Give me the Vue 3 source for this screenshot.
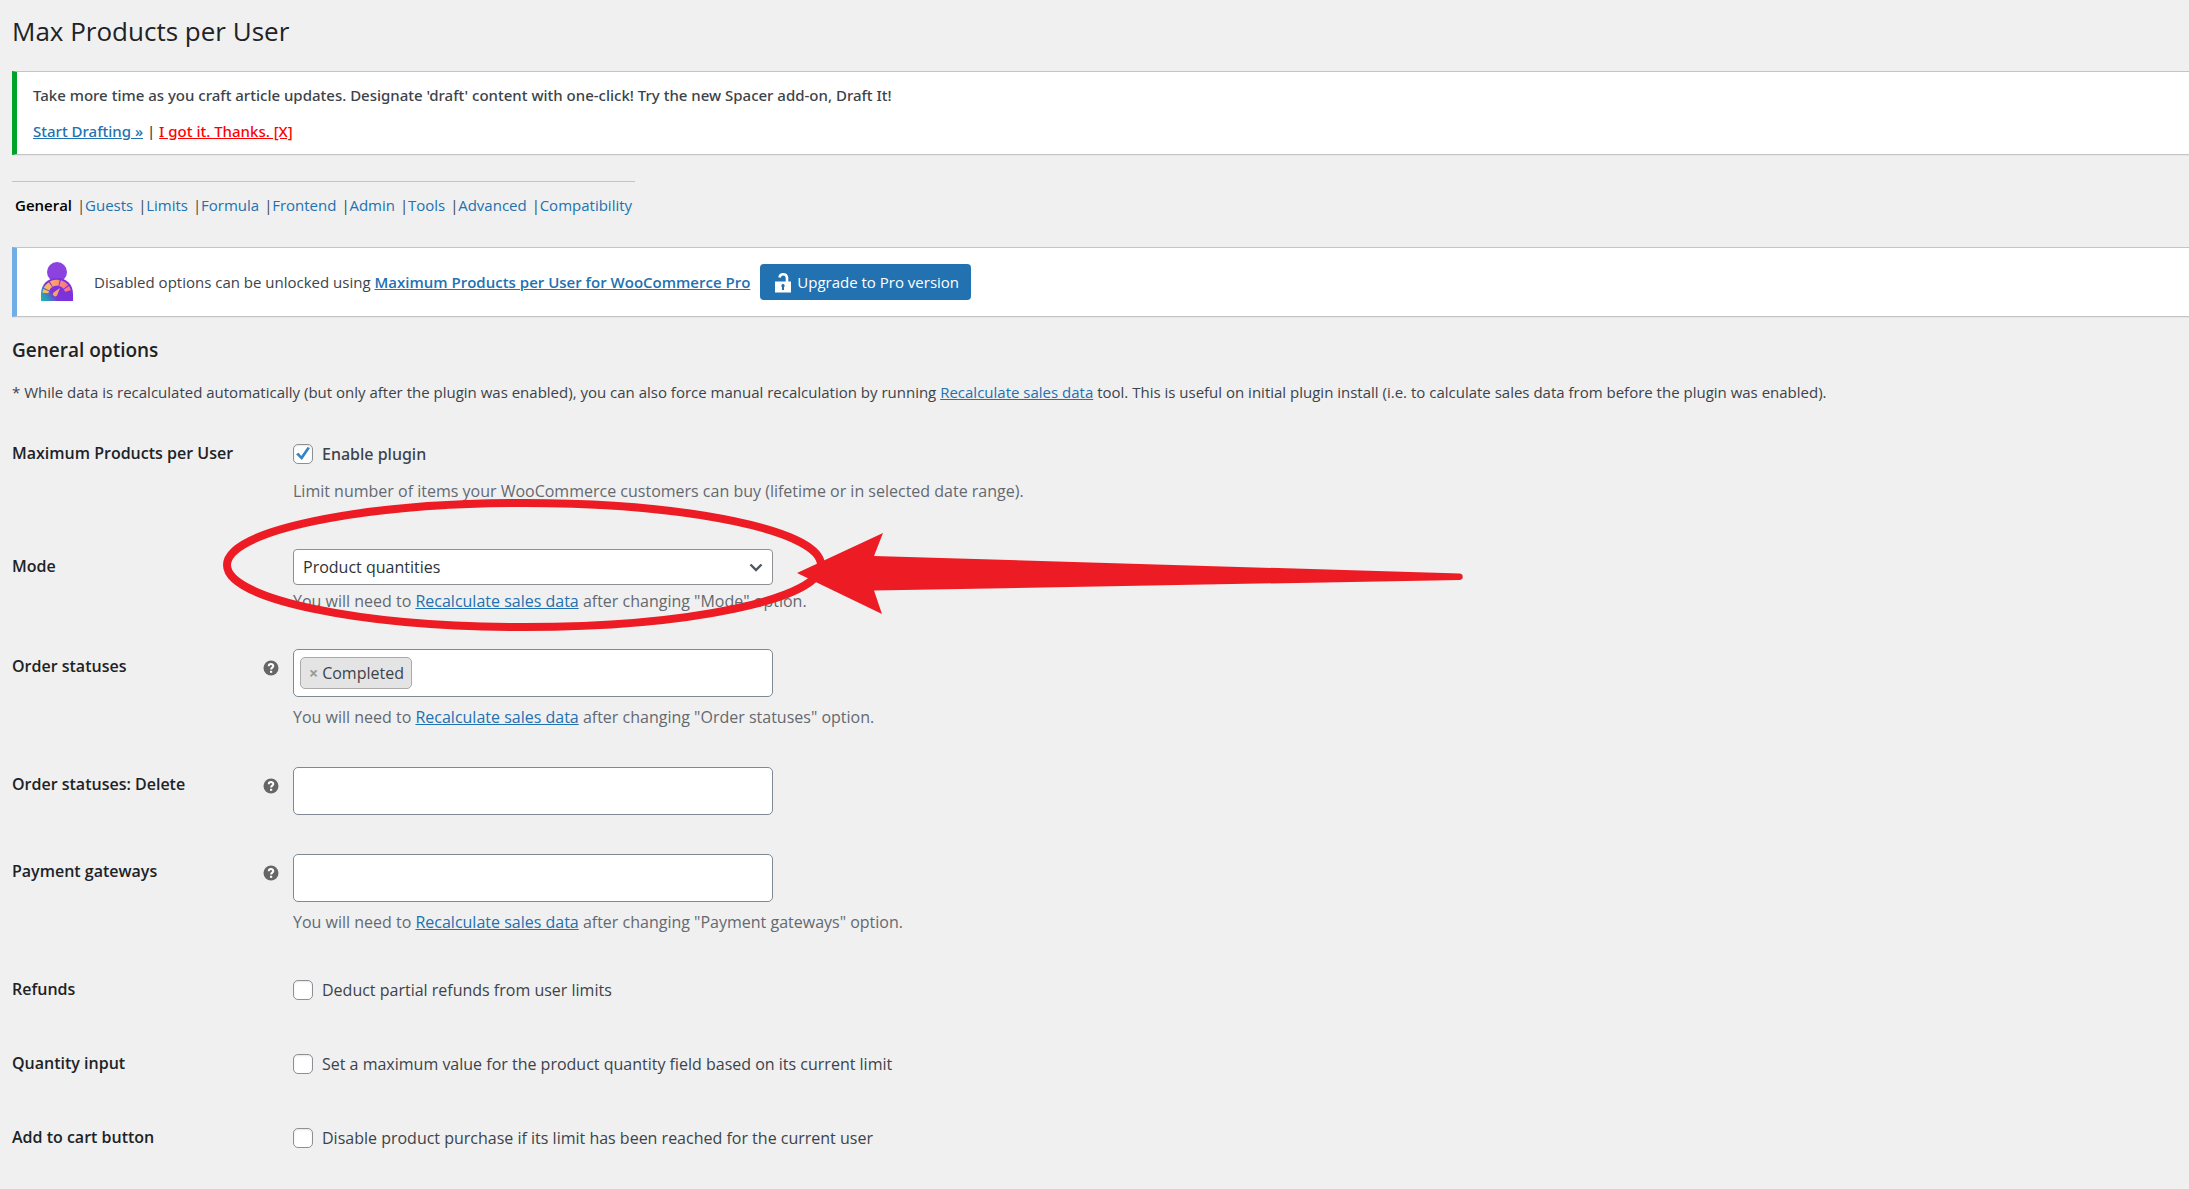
<template>
  <div class="wrap">
    <h1>Max Products per User</h1>

    <div class="notice notice-success">
      <p>Take more time as you craft article updates. Designate 'draft' content with one-click! Try the new Spacer add-on, Draft It!</p>
      <p><a href="#">Start Drafting »</a> | <a href="#" class="dismiss">I got it. Thanks. [X]</a></p>
    </div>

    <nav class="sections">
      <template v-for="(section, i) in sections" :key="section">
        <span v-if="i > 0" class="bar">|</span>
        <a href="#" :class="{ current: section === current }" @click.prevent="current = section">{{ section }}</a>
      </template>
    </nav>

    <div class="notice notice-info">
      <svg class="logo" viewBox="0 0 34 40" aria-hidden="true">
        <defs>
          <linearGradient id="body" x1="0" y1="1" x2="1" y2="0.5">
            <stop offset="0" stop-color="#1fb5b0" />
            <stop offset="0.2" stop-color="#2f95bb" />
            <stop offset="0.45" stop-color="#7a35d8" />
            <stop offset="1" stop-color="#7d2fdc" />
          </linearGradient>
          <linearGradient id="gauge" x1="0" y1="0" x2="1" y2="0">
            <stop offset="0" stop-color="#fdbb62" />
            <stop offset="1" stop-color="#fb7185" />
          </linearGradient>
        </defs>
        <circle cx="17" cy="10" r="10" fill="#8b42de" />
        <path d="M1 39V32C1 22 8 16 17 16S33 22 33 32V39Z" fill="url(#body)" />
        <path d="M5.500 31A11.500 11.500 0 0 1 28 29" fill="none" stroke="url(#gauge)" stroke-width="6" stroke-dasharray="3 1 6 1 8 1 7 1 8" />
        <path d="M20 26L17 33.500A2.300 2.300 0 1 1 13.500 30.500Z" fill="#fba26c" />
      </svg>
      <p>Disabled options can be unlocked using <a href="#" class="strong">Maximum Products per User for WooCommerce Pro</a></p>
      <button type="button" class="upgrade">
        <svg viewBox="0 0 16 21" aria-hidden="true">
          <path d="M4.500 5.500A3.800 3.800 0 0 1 12 5.500V10" fill="none" stroke="#fff" stroke-width="2.600" />
          <path fill-rule="evenodd" d="M0 9.500H16V20.500H0ZM8 12A1.800 1.800 0 0 0 7 15.200V18H9V15.200A1.800 1.800 0 0 0 8 12Z" fill="#fff" />
        </svg>
        Upgrade to Pro version
      </button>
    </div>

    <h2>General options</h2>
    <p class="intro">* While data is recalculated automatically (but only after the plugin was enabled), you can also force manual recalculation by running <a href="#">Recalculate sales data</a> tool. This is useful on initial plugin install (i.e. to calculate sales data from before the plugin was enabled).</p>

    <form class="options" @submit.prevent>
      <div v-for="row in rows" :key="row.id" class="row" :class="row.type">
        <div class="title">
          <label :for="row.id">{{ row.title }}</label>
          <svg v-if="row.type === 'tags'" class="help" viewBox="0 0 16 16" aria-hidden="true">
            <circle cx="8" cy="8" r="7.500" fill="#666" />
            <path d="M5.700 6.200C5.800 3.400 10.300 3.500 10.300 6C10.300 7.600 8.100 7.700 8.100 9.500" fill="none" stroke="#fff" stroke-width="2" />
            <rect x="7" y="10.800" width="2.200" height="2" fill="#fff" />
          </svg>
        </div>
        <div class="field">
          <label v-if="row.type === 'check'" class="check-line" :class="{ medium: row.desc }">
            <input :id="row.id" v-model="row.value" type="checkbox" />
            <span>{{ row.label }}</span>
          </label>

          <div v-else-if="row.type === 'select'" class="select-box">
            <select :id="row.id" v-model="row.value">
              <option>Product quantities</option>
            </select>
            <svg class="chevron" viewBox="0 0 14 9" aria-hidden="true">
              <path d="M1.500 1.500L7 7L12.500 1.500" fill="none" stroke="#50575e" stroke-width="2.400" />
            </svg>
          </div>

          <div v-else class="tag-box">
            <span v-for="tag in row.value" :key="tag" class="tag">
              <button type="button" @click="removeTag(row, tag)">×</button>{{ tag }}
            </span>
            <input :id="row.id" type="text" />
          </div>

          <p v-if="row.desc" class="description">{{ row.desc }}</p>
          <p v-if="row.recalc" class="description">
            You will need to <a href="#">Recalculate sales data</a> after changing "{{ row.title }}" option.
          </p>

          <!-- red marker around the mode setting -->
          <svg v-if="row.type === 'select'" class="marker" viewBox="220 495 1250 140" aria-hidden="true">
            <ellipse cx="524" cy="565" rx="297" ry="62" fill="none" stroke="#ed1c24" stroke-width="8" />
            <path d="M797 573L883 533L874 556L1460 573.500A3.300 3.300 0 0 1 1460 580L874 590.500L882 614Z" fill="#ed1c24" />
          </svg>
        </div>
      </div>
    </form>
  </div>
</template>

<script setup>
import { ref } from 'vue'

const sections = ['General', 'Guests', 'Limits', 'Formula', 'Frontend', 'Admin', 'Tools', 'Advanced', 'Compatibility']
const current = ref('General')

const rows = ref([
  {
    id: 'enabled',
    type: 'check',
    title: 'Maximum Products per User',
    label: 'Enable plugin',
    value: true,
    desc: 'Limit number of items your WooCommerce customers can buy (lifetime or in selected date range).'
  },
  { id: 'mode', type: 'select', title: 'Mode', value: 'Product quantities', recalc: true },
  { id: 'statuses', type: 'tags', title: 'Order statuses', value: ['Completed'], recalc: true },
  { id: 'statuses-delete', type: 'tags', title: 'Order statuses: Delete', value: [] },
  { id: 'gateways', type: 'tags', title: 'Payment gateways', value: [], recalc: true },
  { id: 'refunds', type: 'check', title: 'Refunds', label: 'Deduct partial refunds from user limits', value: false },
  {
    id: 'quantity',
    type: 'check',
    title: 'Quantity input',
    label: 'Set a maximum value for the product quantity field based on its current limit',
    value: false
  },
  {
    id: 'cart',
    type: 'check',
    title: 'Add to cart button',
    label: 'Disable product purchase if its limit has been reached for the current user',
    value: false
  }
])

function removeTag(row, tag) {
  row.value = row.value.filter((t) => t !== tag)
}
</script>

<style>
body {
  background: #f0f0f0;
}
</style>

<style scoped>
.wrap {
  padding: 11px 0 32px 12px;
  color: #3c434a;
  font-family: 'Segoe UI', 'Open Sans', 'Noto Sans', sans-serif;
  font-size: 15px;
  line-height: 22px;
  overflow-x: hidden;
}
h1 {
  margin: 0 0 20px;
  color: #1d2327;
  font-size: 26px;
  font-weight: 400;
  line-height: 40px;
}
h2 {
  margin: 20px 0 18px;
  color: #1d2327;
  font-size: 19px;
  font-weight: 600;
  line-height: 26px;
}
p {
  margin: 0;
}
a {
  color: #2271b1;
}

.notice {
  box-sizing: border-box;
  background: #fff;
  border: 1px solid #c3c4c7;
  border-left-width: 5px;
  border-right: 0;
  box-shadow: 0 1px 1px rgba(0, 0, 0, 0.04);
}
.notice-success {
  display: flex;
  flex-direction: column;
  gap: 14px;
  padding: 12px 16px;
  border-left-color: #00a32a;
  font-family: 'Segoe UI', 'Noto Sans', sans-serif;
  font-weight: 500;
}
.dismiss {
  color: #f00;
}
.notice-info {
  display: flex;
  align-items: center;
  height: 70px;
  padding-left: 23px;
  border-left-color: #72aee6;
}
.logo {
  width: 34px;
  height: 40px;
  margin-right: 20px;
}
.strong {
  font-weight: 600;
}
.upgrade {
  display: flex;
  align-items: center;
  gap: 6px;
  height: 36px;
  margin-left: 10px;
  padding: 0 12px 0 15px;
  border: 0;
  border-radius: 4px;
  background: #2271b1;
  color: #fff;
  font: inherit;
}
.upgrade svg {
  width: 16px;
  height: 21px;
}

.sections {
  display: flex;
  width: fit-content;
  margin: 26px 0 31px;
  padding: 12px 3px 0;
  border-top: 1px solid #c3c4c7;
}
.sections a {
  text-decoration: none;
}
.sections .current {
  color: #000;
  font-weight: 600;
}
.bar {
  width: 8px;
  margin-left: 5px;
}

.intro {
  margin-bottom: 14px;
}

.row {
  display: flex;
}
.title {
  display: flex;
  justify-content: space-between;
  width: 281px;
  padding: 25px 14px 0 0;
  box-sizing: border-box;
  color: #1d2327;
  font-size: 16px;
  font-weight: 600;
}
.help {
  width: 16px;
  height: 16px;
  margin-top: 5px;
}
.field {
  position: relative;
  padding: 19px 0 20px;
  font-size: 16px;
}
.check-line {
  display: flex;
  align-items: center;
  gap: 9px;
  height: 35px;
}
.medium {
  font-family: 'Segoe UI', 'Noto Sans', sans-serif;
  font-weight: 500;
}
.check-line input {
  appearance: none;
  display: grid;
  place-items: center;
  width: 20px;
  height: 20px;
  margin: 0;
  border: 1px solid #8c8f94;
  border-radius: 5px;
  background: #fff;
  box-shadow: inset 0 1px 2px rgba(0, 0, 0, 0.1);
}
.check-line input:checked::before {
  content: '';
  width: 14px;
  height: 13px;
  background: #3582c4;
  clip-path: polygon(0 55%, 18% 45%, 38% 70%, 82% 0, 100% 8%, 42% 100%);
}
.check .description {
  margin-bottom: 8px;
}

.select-box {
  position: relative;
  width: 480px;
}
select {
  appearance: none;
  display: block;
  width: 100%;
  height: 36px;
  padding: 0 30px 0 9px;
  border: 1px solid #8c8f94;
  border-radius: 4px;
  background: #fff;
  color: #2c3338;
  font: inherit;
}
.chevron {
  position: absolute;
  top: 14px;
  right: 10px;
  width: 14px;
  height: 9px;
  pointer-events: none;
}

.tag-box {
  display: flex;
  align-items: center;
  width: 480px;
  height: 48px;
  padding: 0 6px;
  box-sizing: border-box;
  border: 1px solid #7e8993;
  border-radius: 5px;
  background: #fff;
}
.tag {
  display: flex;
  align-items: center;
  height: 32px;
  padding: 0 7px 0 8px;
  box-sizing: border-box;
  border: 1px solid #aaa;
  border-radius: 5px;
  background: #e4e4e4;
}
.tag button {
  padding: 0;
  margin-right: 4px;
  border: 0;
  background: none;
  color: #999;
  font: inherit;
  font-weight: 700;
}
.tag-box input {
  flex: 1;
  min-width: 0;
  border: 0;
  outline: 0;
  background: none;
  font: inherit;
}

.description {
  margin-top: 9px;
  color: #646970;
}
.select .field {
  padding-bottom: 18px;
}
.select .description {
  margin-top: 5px;
}

.marker {
  position: absolute;
  top: -35px;
  left: -73px;
  width: 1250px;
  height: 140px;
  pointer-events: none;
}
</style>
